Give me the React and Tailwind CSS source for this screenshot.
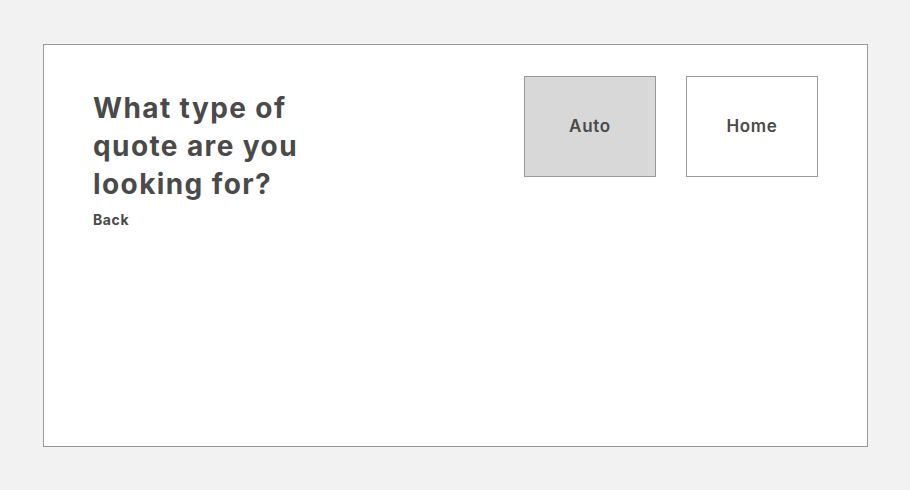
export default function App() {
  return (
    <div className="min-h-[490px] w-full bg-[#f2f2f2] pt-[44px] pl-[43px] pr-[42px] pb-[43px] font-['Inter','Liberation_Sans',sans-serif] text-[#4a4a4a]">
      <div className="flex h-[403px] justify-between border border-[#999999] bg-white pl-[49px] pr-[49px] pt-[31px]">
        {/* Question */}
        <div className="pt-[13px]">
          <h1 className="text-[28px] font-bold leading-[38px] tracking-[1.4px]">
            What type of
            <br />
            quote are you
            <br />
            looking for?
          </h1>
          <button className="mt-[6px] text-[14px] font-bold tracking-[0.6px] text-[#4a4a4a]">Back</button>
        </div>

        {/* Options */}
        <div className="flex gap-[30px]">
          <button className="flex h-[101px] w-[132px] items-center justify-center border border-[#999999] bg-[#d8d8d8] text-[17px] font-semibold tracking-[0.7px]">
            Auto
          </button>
          <button className="flex h-[101px] w-[132px] items-center justify-center border border-[#999999] bg-white text-[17px] font-semibold tracking-[0.7px]">
            Home
          </button>
        </div>
      </div>
    </div>
  );
}
